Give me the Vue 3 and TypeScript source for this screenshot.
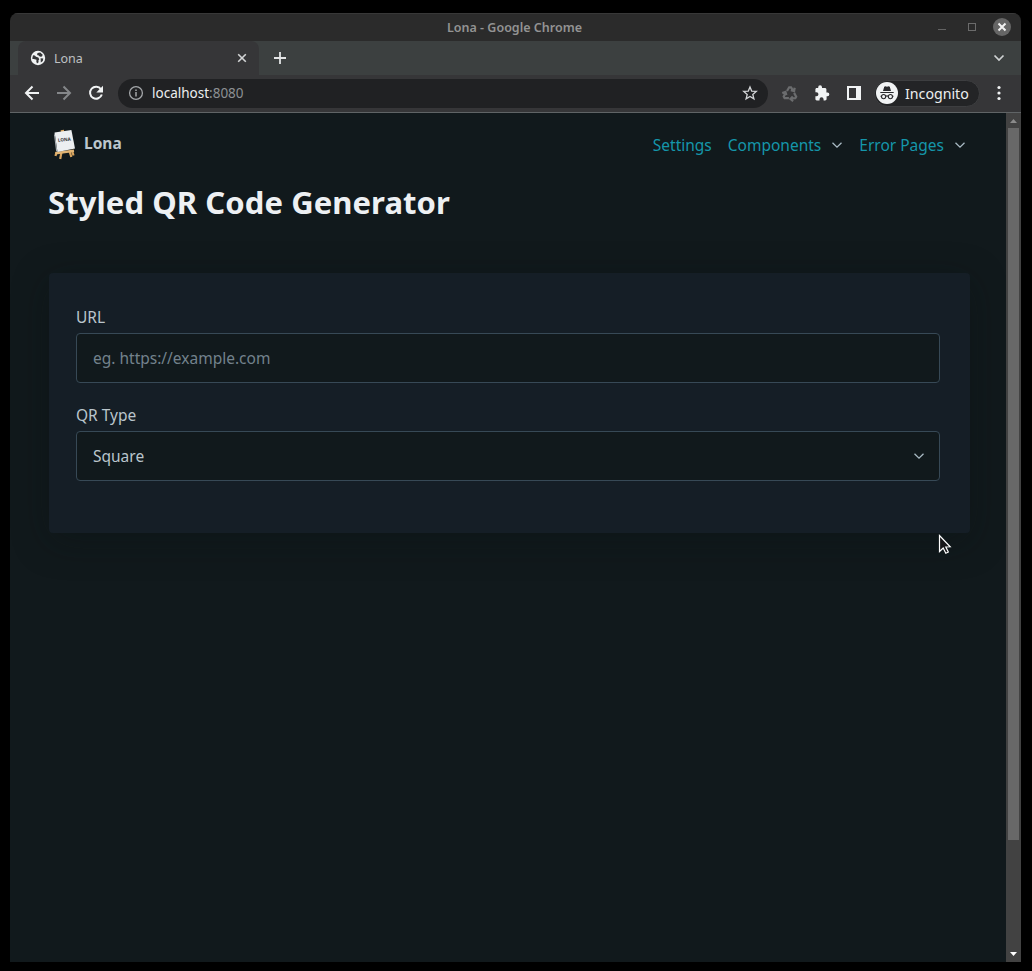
<script setup lang="ts">
interface NavItem {
  label: string
  menu: boolean
}

const navItems: NavItem[] = [
  { label: 'Settings', menu: false },
  { label: 'Components', menu: true },
  { label: 'Error Pages', menu: true },
]
</script>

<template>
  <div class="desktop">
    <div class="window">
      <div class="titlebar">
        <span class="window-title">Lona - Google Chrome</span>
        <div class="window-buttons">
          <svg width="30" height="28" viewBox="0 0 30 28"><path d="M11 16.5h8" stroke="#636363" /></svg>
          <svg width="30" height="28" viewBox="0 0 30 28"><rect x="11.5" y="10.500" width="7" height="7" fill="none" stroke="#6b6b6b" /></svg>
          <svg width="30" height="28" viewBox="0 0 30 28">
            <circle cx="15" cy="14" r="9" fill="#666" />
            <path d="M11.500 10.500l7 7m0-7l-7 7" stroke="#f2f2f2" stroke-width="2" />
          </svg>
        </div>
      </div>

      <div class="tabstrip">
        <div class="tab">
          <svg class="globe" width="16" height="16" viewBox="0 0 16 16">
            <circle cx="8" cy="8" r="7.200" fill="#f1f3f4" />
            <path d="M3 5.200l1.800.2L6 6.700l2.300.8 1 1.800-.9 1.300.2 1.700-1.600 1.300-.7-2.200.2-1.600L4.800 9.200l-2.600-.4zM7.500 3l2.700-.4 2.500 2.200-.7 1.700-2 .3-1.200-1.300-1.700-.6zM10.600 8.200l2.700.4-.5 2.400-2 1.600z" fill="#353638" />
          </svg>
          <span class="tab-title">Lona</span>
          <svg class="tab-close" width="16" height="16" viewBox="0 0 16 16"><path d="M4.200 4.200l7.600 7.600m0-7.600l-7.600 7.600" stroke="#d3d5d6" stroke-width="1.600" /></svg>
        </div>
        <svg class="new-tab" width="16" height="16" viewBox="0 0 16 16"><path d="M2 8h12M8 2v12" stroke="#e3e5e6" stroke-width="1.800" /></svg>
        <svg class="tab-search" width="16" height="16" viewBox="0 0 16 16"><path d="M3.500 5.500L8 10l4.500-4.500" fill="none" stroke="#cfd2d3" stroke-width="1.700" /></svg>
      </div>

      <div class="toolbar">
        <svg width="32" height="32" viewBox="0 0 32 32"><path d="M23 16H10m6.500-6.500L10 16l6.500 6.500" fill="none" stroke="#f1f3f4" stroke-width="2" /></svg>
        <svg width="32" height="32" viewBox="0 0 32 32"><path d="M9 16h13m-6.500-6.500L22 16l-6.500 6.500" fill="none" stroke="#85878a" stroke-width="2" /></svg>
        <svg width="32" height="32" viewBox="0 0 32 32">
          <path d="M21 12.300A6 6 0 1 0 21.800 17.500" fill="none" stroke="#f1f3f4" stroke-width="2" />
          <path d="M23 8.700v6.700h-6.700z" fill="#f1f3f4" />
        </svg>
        <div class="omnibox">
          <svg width="16" height="16" viewBox="0 0 16 16">
            <circle cx="8" cy="8" r="6.400" fill="none" stroke="#a4a7aa" stroke-width="1.300" />
            <path d="M8 7v4.500M8 4.400V6" stroke="#a4a7aa" stroke-width="1.500" />
          </svg>
          <span class="address"><span class="host">localhost</span>:8080</span>
          <svg class="star" width="16" height="16" viewBox="0 0 16 16"><path d="M8 1.900l1.700 4.200 4.600.3-3.500 3 1.100 4.400L8 11.400l-3.900 2.400 1.100-4.400-3.500-3 4.600-.3z" fill="none" stroke="#d3d5d7" stroke-width="1.300" /></svg>
        </div>
        <svg class="recycle" width="32" height="32" viewBox="0 0 32 32">
          <g fill="none" stroke="#6b6c6e" stroke-width="2.200">
            <path id="arm" d="M13 14l2.200-3.700h1.800l1.900 2.900M20.700 10.700l-.6 3.400-3.300-.8" />
            <path d="M13 14l2.200-3.700h1.800l1.900 2.900M20.700 10.700l-.6 3.400-3.300-.8" transform="rotate(120 16 17)" />
            <path d="M13 14l2.200-3.700h1.800l1.900 2.900M20.700 10.700l-.6 3.400-3.300-.8" transform="rotate(240 16 17)" />
          </g>
        </svg>
        <svg width="32" height="32" viewBox="0 0 32 32"><path d="M20.500 15.200h-1.100v-3c0-.8-.7-1.400-1.500-1.400H15V9.900a1.900 1.900 0 0 0-3.800 0v.9H9.800c-.8 0-1.400.6-1.400 1.400v2.700h1a2 2 0 0 1 0 4.100h-1v2.700c0 .8.600 1.400 1.400 1.400h2.700v-1a2 2 0 0 1 4.100 0v1h1.500c.8 0 1.500-.6 1.500-1.400v-2.800h.9a1.850 1.850 0 0 0 0-3.700z" fill="#f1f3f4" transform="translate(1 .3)" /></svg>
        <svg width="32" height="32" viewBox="0 0 32 32"><path fill-rule="evenodd" d="M9 9h14v14H9zM11 11v10h7V11z" fill="#f1f3f4" /></svg>
        <div class="incognito">
          <svg width="22" height="22" viewBox="0 0 22 22">
            <circle cx="11" cy="11" r="11" fill="#f1f3f4" />
            <path d="M7 9l1.200-4.300 1.200-.4 1.600.5 1.600-.5 1.200.4L15 9z" fill="#292a2d" />
            <path d="M4.300 10.500h13.400" stroke="#292a2d" stroke-width="1.200" />
            <g fill="none" stroke="#292a2d" stroke-width="1.100"><circle cx="7.600" cy="14.600" r="2.100" /><circle cx="14.400" cy="14.600" r="2.100" /><path d="M9.700 14.300q1.300-.8 2.600 0M4.500 14.200h1M16.500 14.200h1" /></g>
          </svg>
          <span>Incognito</span>
        </div>
        <svg class="menu" width="32" height="32" viewBox="0 0 32 32"><g fill="#f1f3f4"><circle cx="16" cy="10.500" r="1.600" /><circle cx="16" cy="16" r="1.600" /><circle cx="16" cy="21.500" r="1.600" /></g></svg>
      </div>

      <div class="viewport">
        <div class="page">
          <header class="site-header">
            <div class="brand">
              <svg width="24" height="32" viewBox="0 0 24 32">
                <path d="M8 3.200l-.4-2 3.300-.5.5 2.500z" fill="#dca860" />
                <path d="M3.500 23l-1 4M19 21.500l1.500 5M8.500 23l-1.300 7M16.500 22l1.800 6" stroke="#d8a45e" stroke-width="2.200" />
                <path d="M2.600 24.200L21 21.800" stroke="#e2b574" stroke-width="2.600" />
                <path d="M1.600 3.500l16.800-2.400L22 19.500 4.500 23z" fill="#eceff1" />
                <path d="M1.600 3.500L4.500 23l-1.400-.8-2-16z" fill="#a9afb3" />
                <text x="5" y="12.800" transform="rotate(-5 5 12.800)">LONA</text>
              </svg>
              <strong>Lona</strong>
            </div>
            <nav>
              <a v-for="item in navItems" :key="item.label" :class="{ dropdown: item.menu }">
                <span>{{ item.label }}</span>
                <svg v-if="item.menu" width="12" height="12" viewBox="0 0 12 12"><path d="M1.500 3.800L6 8.200l4.500-4.400" fill="none" stroke="#a9bac3" stroke-width="1.300" /></svg>
              </a>
            </nav>
          </header>

          <h1>Styled QR Code Generator</h1>

          <section class="card">
            <label for="url">URL</label>
            <input id="url" class="control" type="text" placeholder="eg. https://example.com" />
            <label for="type">QR Type</label>
            <div id="type" class="control select">
              <span>Square</span>
              <svg width="12" height="12" viewBox="0 0 12 12"><path d="M1.500 3.800L6 8.200l4.500-4.400" fill="none" stroke="#a9bac3" stroke-width="1.300" /></svg>
            </div>
          </section>
        </div>
        <div class="scrollbar">
          <svg width="15" height="15" viewBox="0 0 15 15"><path d="M4 10l3.500-4 3.500 4z" fill="#8b8b8b" /></svg>
          <div class="thumb"></div>
          <svg width="15" height="15" viewBox="0 0 15 15"><path d="M4 5h7l-3.500 4z" fill="#fff" /></svg>
        </div>
      </div>
    </div>
    <svg class="cursor" width="14" height="21" viewBox="0 0 14 21"><path d="M1.500 1.500v16l3.700-3.500 2.600 5.200 2.500-1.200-2.500-5 4.400-.2z" fill="#171719" stroke="#fff" stroke-width="1.200" /></svg>
  </div>
</template>

<style>
body {
  margin: 0;
  background: #000;
}
</style>

<style scoped>
* {
  box-sizing: border-box;
}
svg {
  display: block;
  flex: none;
}
.desktop {
  position: relative;
  width: 1032px;
  height: 971px;
  padding: 13px 11px 9px 10px;
  background: #000;
  font-family: 'Noto Sans', 'Open Sans', sans-serif;
  font-size: 15.5px;
}
.window {
  display: flex;
  flex-direction: column;
  height: 949px;
  border-radius: 8px 8px 0 0;
  overflow: hidden;
}
.titlebar {
  display: grid;
  grid-template-columns: 1fr auto 1fr;
  align-items: center;
  height: 28px;
  background: #2b2b2b;
  border-top: 1px solid #383838;
}
.window-title {
  grid-column: 2;
  color: #939393;
  font-size: 12.5px;
  font-weight: 600;
  line-height: 27px;
  margin-right: 2px;
}
.window-buttons {
  display: flex;
  justify-content: flex-end;
  padding-right: 4px;
  margin-top: -1px;
}
.tabstrip {
  display: flex;
  align-items: center;
  height: 34px;
  padding: 0 14px 0 8px;
  background: #3c4040;
}
.tab {
  display: flex;
  align-items: center;
  width: 241px;
  height: 34px;
  padding: 0 9px 0 12px;
  border-radius: 8px 8px 0 0;
  background: #363638;
}
.tab-title {
  margin-left: 8px;
  color: #bfc1c3;
  font-size: 12.5px;
}
.tab-close {
  margin-left: auto;
}
.new-tab {
  margin-left: 13px;
}
.tab-search {
  margin-left: auto;
}
.toolbar {
  display: flex;
  align-items: center;
  height: 38px;
  padding: 0 0 1px 6px;
  background: #363638;
  border-bottom: 1px solid #606466;
}
.omnibox {
  display: flex;
  align-items: center;
  width: 650px;
  height: 29px;
  margin: 0 6px;
  padding: 0 10px;
  border-radius: 15px;
  background: #202123;
}
.address {
  margin-left: 8px;
  color: #8c9093;
  font-size: 13.5px;
}
.host {
  color: #eceeef;
}
.star {
  margin-left: auto;
}
.incognito {
  display: flex;
  align-items: center;
  width: 106px;
  height: 27px;
  margin: 0 3px 0 4px;
  padding-left: 1px;
  border-radius: 14px;
  background: #232426;
  border: 1px solid #3d3e40;
  color: #eceeef;
  font-size: 14.2px;
}
.incognito span {
  margin-left: 7px;
}
.viewport {
  display: flex;
  flex: 1;
  background: #11191c;
}
.page {
  width: 996px;
  padding: 16px 36px 0 38px;
}
.site-header {
  display: flex;
  justify-content: space-between;
  height: 32px;
}
.brand {
  display: flex;
  align-items: center;
  gap: 7px;
  padding-left: 5px;
  color: #bcc6cd;
}
.brand strong {
  line-height: 28px;
  margin-top: -4px;
}
.brand text {
  font-size: 4.6px;
  font-weight: 700;
  fill: #34383a;
}
nav {
  display: flex;
  gap: 16px;
  padding-right: 4px;
}
nav a {
  display: flex;
  align-items: center;
  color: #1596aa;
}
nav a.dropdown {
  gap: 10px;
}
h1 {
  margin: 22px 0 0;
  color: #edf0f3;
  font-size: 31px;
  line-height: 38px;
  font-weight: 700;
  letter-spacing: 0.08px;
}
.card {
  height: 260px;
  margin: 52px 0 0 1px;
  width: 921px;
  padding: 32px 30px 0 27px;
  border-radius: 4px;
  background: #151e26;
  box-shadow: 0 8px 36px rgba(8, 18, 18, 0.35);
  color: #bac5cc;
}
label {
  display: block;
  height: 24px;
  margin-bottom: 4px;
  line-height: 24px;
}
.control {
  display: flex;
  align-items: center;
  width: 864px;
  height: 50px;
  margin-bottom: 20px;
  padding: 0 16px;
  border: 1px solid #374956;
  border-radius: 4px;
  background: #11191c;
  color: #bac5cc;
  font: inherit;
}
.control::placeholder {
  color: #73828c;
  opacity: 1;
}
.select {
  justify-content: space-between;
  padding-right: 14px;
}
.scrollbar {
  display: flex;
  flex-direction: column;
  align-items: center;
  width: 15px;
  background: #424242;
}
.scrollbar svg:last-child {
  margin-top: auto;
}
.thumb {
  width: 11px;
  height: 712px;
  background: #686868;
}
.cursor {
  position: absolute;
  left: 938px;
  top: 534px;
}
</style>
